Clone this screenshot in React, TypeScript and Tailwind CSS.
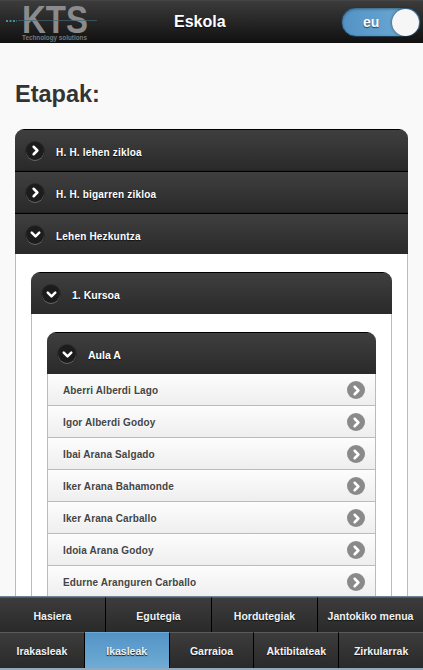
import React from 'react';
import { ChevronDown, ChevronRight } from 'lucide-react';

const STUDENTS = [
  'Aberri Alberdi Lago',
  'Igor Alberdi Godoy',
  'Ibai Arana Salgado',
  'Iker Arana Bahamonde',
  'Iker Arana Carballo',
  'Idoia Arana Godoy',
  'Edurne Aranguren Carballo',
];

const NAV_TOP = ['Hasiera', 'Egutegia', 'Hordutegiak', 'Jantokiko menua'];
const NAV_BOTTOM = ['Irakasleak', 'Ikasleak', 'Garraioa', 'Aktibitateak', 'Zirkularrak'];

function KtsLogo() {
  return (
    <svg width="110" height="41" viewBox="0 0 110 41" className="shrink-0">
      <text x="22" y="31" fontSize="39" fontWeight="700" fill="#8b8b8d" textLength="66" lengthAdjust="spacingAndGlyphs" fontFamily="'Liberation Sans', Arial, sans-serif">
        KTS
      </text>
      <line x1="18" y1="18.5" x2="97" y2="18.5" stroke="#3f6670" strokeWidth="0.7" />
      <line x1="6" y1="19" x2="17" y2="19" stroke="#49b5bd" strokeWidth="1.6" strokeDasharray="2 1.5" />
      <text x="22" y="37.5" fontSize="6.5" fontWeight="700" fill="#77777a" textLength="65" lengthAdjust="spacingAndGlyphs" fontFamily="'Liberation Sans', Arial, sans-serif">
        Technology solutions
      </text>
    </svg>
  );
}

function ToggleIcon({ open }: { open: boolean }) {
  const Icon = open ? ChevronDown : ChevronRight;
  return (
    <span className="mt-[1px] flex h-[18px] w-[18px] items-center justify-center rounded-full bg-[#1c1c1c] shadow-[0_1px_0_rgba(255,255,255,0.3),0_0_0_1px_rgba(0,0,0,0.25)]">
      <Icon className="h-[15px] w-[15px] text-white" strokeWidth={4} />
    </span>
  );
}

function BarHeader({ label, open, className }: { label: string; open: boolean; className: string }) {
  return (
    <div className={`flex items-center bg-gradient-to-b from-[#3f3f3f] to-[#2a2a2a] border-t border-black text-white font-bold [text-shadow:0_1px_1px_#111] ${className}`}>
      <ToggleIcon open={open} />
      <span className="ml-[12px] pt-[5px]">{label}</span>
    </div>
  );
}

function NavCell({ label, active, last }: { label: string; active?: boolean; last?: boolean }) {
  return (
    <div
      className={`flex flex-1 items-center justify-center border-t pt-[3px] text-[10.5px] font-bold text-[#f2f2f2] [text-shadow:0_1px_1px_#111] ${
        active
          ? 'border-[#6fa9d6] bg-gradient-to-b from-[#5393c5] to-[#6facd5]'
          : 'border-[#5a5a5a] bg-gradient-to-b from-[#3c3c3c] to-[#2a2a2a]'
      } ${last ? '' : 'border-r border-r-black'}`}
    >
      {label}
    </div>
  );
}

export default function App() {
  return (
    <div className="flex h-[670px] w-[423px] flex-col overflow-hidden bg-[#f9f9f9] font-['Liberation_Sans',Arial,sans-serif]">
      {/* Header */}
      <header className="flex h-[43px] shrink-0 items-center bg-gradient-to-b from-[#3c3c3c] to-[#111111] border-t border-[#444]">
        <KtsLogo />
        <h1 className="ml-[64px] text-[16px] font-bold text-white [text-shadow:0_1px_1px_#111]">Eskola</h1>
        <div className="ml-auto mr-[2px] flex h-[30px] w-[80px] items-center rounded-full border border-[#1d3a50] bg-gradient-to-r from-[#5393c5] to-[#6facd5] shadow-[inset_0_1px_3px_rgba(0,0,0,0.4)]">
          <span className="ml-[21px] text-[14px] font-bold text-white [text-shadow:0_1px_1px_#245]">eu</span>
          <span className="ml-auto mr-[1px] h-[27px] w-[27px] rounded-full bg-[#f6f6f6] shadow-[0_0_3px_rgba(0,0,0,0.6)]" />
        </div>
      </header>

      {/* Content */}
      <main className="min-h-0 flex-1 overflow-hidden px-[15px] pt-[36px]">
        <h2 className="text-[23.5px] font-bold leading-[30px] text-[#333333]">Etapak:</h2>

        <div className="mt-[20px] w-[393px] overflow-hidden rounded-t-[9px]">
          <BarHeader label="H. H. lehen zikloa" open={false} className="h-[42px] pl-[11px] text-[10px] tracking-[0.2px] border-b border-b-[#222]" />
          <BarHeader label="H. H. bigarren zikloa" open={false} className="h-[42px] pl-[11px] text-[10px] tracking-[0.2px] border-b border-b-[#222]" />
          <BarHeader label="Lehen Hezkuntza" open className="h-[41px] pl-[11px] text-[10px] tracking-[0.2px]" />

          <div className="border-x border-[#bbbbbb] bg-white px-[15px] pt-[18px]">
            <div className="overflow-hidden rounded-t-[9px]">
              <BarHeader label="1. Kursoa" open className="h-[42px] pl-[11px] text-[10.5px]" />

              <div className="border-x border-[#bbbbbb] bg-white px-[15px] pt-[18px]">
                <div className="overflow-hidden rounded-t-[9px]">
                  <BarHeader label="Aula A" open className="h-[42px] pl-[11px] text-[10.5px]" />

                  <ul className="border-x border-[#bbbbbb]">
                    {STUDENTS.map(name => (
                      <li
                        key={name}
                        className="flex h-[32px] items-center border-b border-[#bbbbbb] bg-gradient-to-b from-[#fdfdfd] to-[#eeeeee] pl-[15px] pr-[10px] text-[10px] font-bold tracking-[0.12px] text-[#444444] [text-shadow:0_1px_0_#fff]"
                      >
                        <span className="pt-[2px]">{name}</span>
                        <span className="ml-auto mt-[1px] flex h-[18px] w-[18px] items-center justify-center rounded-full bg-[#8a8a8a]">
                          <ChevronRight className="h-[15px] w-[15px] text-white" strokeWidth={4} />
                        </span>
                      </li>
                    ))}
                  </ul>
                </div>
              </div>
            </div>
          </div>
        </div>
      </main>

      {/* Bottom nav */}
      <nav className="shrink-0 border-t border-[#6d8296] border-b-2 border-b-[#8fa9bf]">
        <div className="flex h-[35px]">
          {NAV_TOP.map((label, i) => (
            <NavCell key={label} label={label} last={i === NAV_TOP.length - 1} />
          ))}
        </div>
        <div className="flex h-[36px]">
          {NAV_BOTTOM.map((label, i) => (
            <NavCell key={label} label={label} active={label === 'Ikasleak'} last={i === NAV_BOTTOM.length - 1} />
          ))}
        </div>
      </nav>
    </div>
  );
}
